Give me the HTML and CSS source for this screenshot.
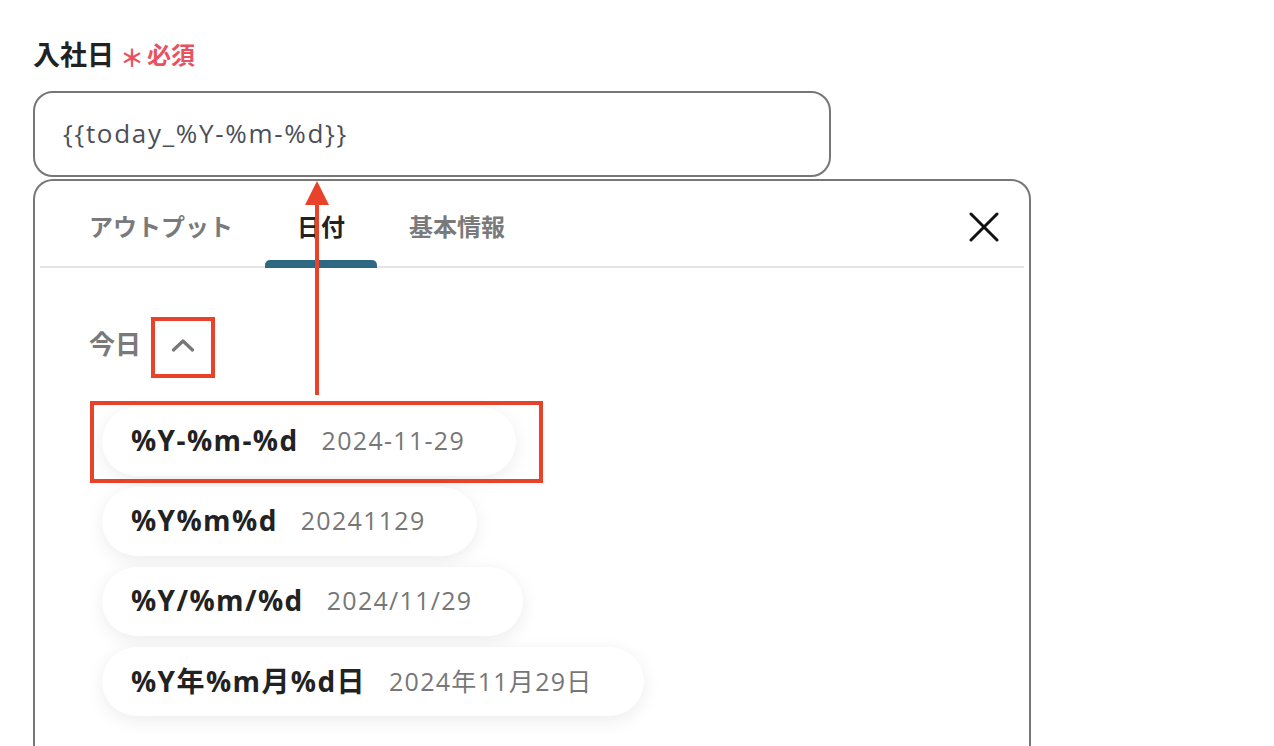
FILE: index.html
```html
<!DOCTYPE html>
<html lang="ja">
<head>
<meta charset="utf-8">
<title>入社日</title>
<link rel="stylesheet" href="styles.css">
</head>
<body>
<div class="page">
  <div class="field-label">
    <span class="label">入社日</span>
    <span class="req"><span class="star">＊</span>必須</span>
  </div>
  <div class="input">{{today_%Y-%m-%d}}</div>
  <div class="panel">
    <div class="tabs">
      <div class="tab">アウトプット</div>
      <div class="tab active">日付</div>
      <div class="tab">基本情報</div>
      <button class="close" aria-label="閉じる">
        <svg width="30" height="30" viewBox="0 0 30 30"><path d="M2 2 L28 28 M28 2 L2 28" stroke="#111" stroke-width="3" stroke-linecap="round" fill="none"/></svg>
      </button>
    </div>
    <div class="panel-body">
      <div class="group-head">
        <span class="group-title">今日</span>
        <span class="chev-box">
          <svg width="24" height="14" viewBox="0 0 24 14"><path d="M2.5 12 L12 3 L21.5 12" stroke="#777" stroke-width="3.2" fill="none" stroke-linecap="round" stroke-linejoin="round"/></svg>
        </span>
      </div>
      <ul class="list">
        <li class="pill marked"><span class="fmt">%Y-%m-%d</span><span class="sample">2024-11-29</span></li>
        <li class="pill"><span class="fmt">%Y%m%d</span><span class="sample">20241129</span></li>
        <li class="pill"><span class="fmt">%Y/%m/%d</span><span class="sample">2024/11/29</span></li>
        <li class="pill"><span class="fmt">%Y年%m月%d日</span><span class="sample">2024年11月29日</span></li>
      </ul>
    </div>
  </div>
  <svg class="arrow" width="24" height="215" viewBox="0 0 24 215">
    <polygon points="12,0 24,24 0,24" fill="#e8432a"/>
    <rect x="10" y="22" width="4" height="192" fill="#e8432a"/>
  </svg>
</div>
</body>
</html>
```
FILE: styles.css
```css
* { box-sizing: border-box; }
html, body { margin: 0; padding: 0; background: #fff; }
body {
  font-family: "Noto Sans CJK JP", "Noto Sans", sans-serif;
  color: #222;
  overflow: hidden;
  height: 746px;
}
.page {
  position: relative;
  padding: 36px 0 0 33px;
}
.field-label {
  display: flex;
  align-items: center;
  height: 36px;
}
.label {
  font-size: 27px;
  font-weight: 700;
  color: #222;
  line-height: 36px;
}
.req {
  margin-left: 6px;
  font-size: 24px;
  font-weight: 700;
  color: #e8525f;
  line-height: 36px;
  display: flex;
  align-items: center;
}
.star {
  font-size: 24px;
  margin-right: 3px;
  position: relative;
  top: 3px;
}
.input {
  margin-top: 19px;
  width: 798px;
  height: 86px;
  border: 2px solid #777;
  border-radius: 20px;
  padding-left: 28px;
  padding-bottom: 3px;
  display: flex;
  align-items: center;
  font-family: "Open Sans", "Noto Sans CJK JP", sans-serif;
  font-size: 26px;
  letter-spacing: 1.7px;
  color: #4b5058;
}
.panel {
  margin-top: 2px;
  width: 998px;
  height: 600px;
  border: 2px solid #777;
  border-bottom: none;
  border-radius: 20px 20px 0 0;
}
.tabs {
  display: flex;
  align-items: flex-start;
  margin: 0 5px;
  padding-left: 17px;
  border-bottom: 2px solid #e4e4e4;
  height: 87px;
}
.tab {
  position: relative;
  height: 85px;
  padding: 30px 32px 0;
  font-size: 24px;
  line-height: 29px;
  font-weight: 700;
  color: #7a7a7a;
}
.tab.active { color: #222; }
.tab.active::after {
  content: "";
  position: absolute;
  left: 0;
  right: 0;
  bottom: -2px;
  height: 8px;
  background: #2f6883;
  border-radius: 5px 5px 0 0;
}
.close {
  margin: 26px 20px 0 auto;
  width: 40px;
  height: 40px;
  border: none;
  background: none;
  padding: 0;
  display: flex;
  align-items: center;
  justify-content: center;
}
.panel-body {
  padding-top: 49px;
}
.group-head {
  display: flex;
  align-items: center;
  padding-left: 54px;
}
.group-title {
  font-size: 26px;
  font-weight: 700;
  color: #7a7a7a;
  line-height: 30px;
  position: relative;
  top: -5px;
}
.chev-box {
  margin-left: 10px;
  width: 64px;
  height: 61px;
  border: 4px solid #e8432a;
  display: flex;
  align-items: center;
  justify-content: center;
}
.chev-box svg { margin-top: -6px; }
.list {
  list-style: none;
  margin: 29px 0 0;
  padding: 0 0 0 67px;
  display: flex;
  flex-direction: column;
  align-items: flex-start;
  gap: 11px;
}
.pill {
  position: relative;
  height: 69px;
  border-radius: 35px;
  background: #fff;
  box-shadow: 0 4px 18px rgba(0, 0, 0, 0.08);
  padding: 0 51px 3px 29px;
  display: flex;
  align-items: center;
  gap: 23px;
  font-family: "Open Sans", "Noto Sans CJK JP", sans-serif;
}
.pill.marked::after {
  content: "";
  position: absolute;
  top: -6px;
  left: -12px;
  right: -27px;
  bottom: -7px;
  border: 4px solid #e8432a;
}
.fmt {
  font-size: 28px;
  font-weight: 700;
  letter-spacing: 1.4px;
  color: #222;
}
.sample {
  font-size: 25px;
  letter-spacing: 1.3px;
  color: #777;
}
.arrow {
  position: absolute;
  left: 305px;
  top: 181px;
}
```
